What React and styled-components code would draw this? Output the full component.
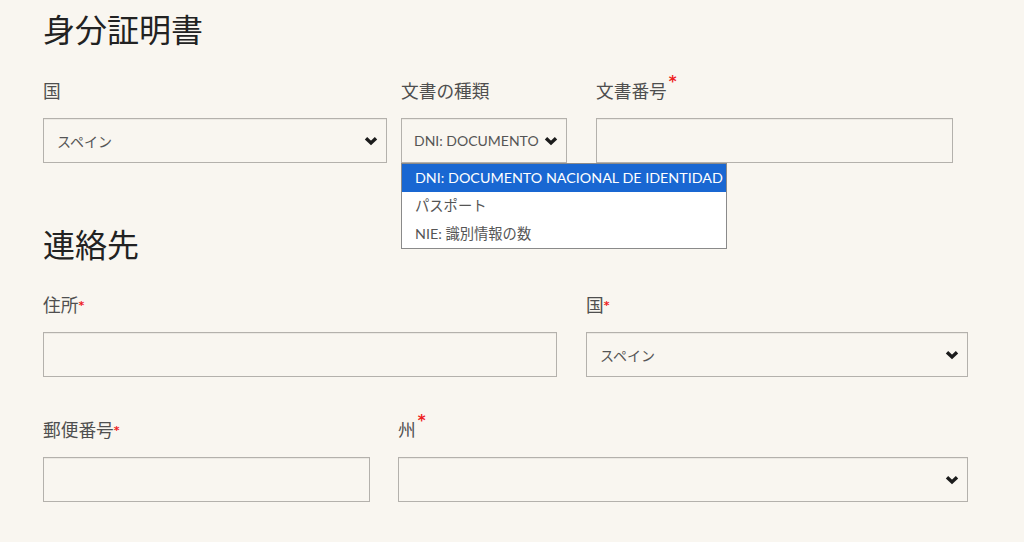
import React from "react";
import styled, { createGlobalStyle } from "styled-components";

const Global = createGlobalStyle`
  html, body { margin: 0; padding: 0; background: #f9f6f0; }
  body { font-family: Lato, "Noto Sans CJK JP", sans-serif; color: #222; }
`;

const Page = styled.div`
  padding: 0 43px;
  min-height: 542px;
  box-sizing: border-box;
`;

const Heading = styled.h2`
  margin: ${(p) => p.$top}px 0 0;
  font-family: "Noto Sans CJK JP", sans-serif;
  font-weight: 400;
  font-size: 32px;
  line-height: 40px;
  height: 40px;
  color: #222;
`;

const Row = styled.div`
  display: flex;
  gap: ${(p) => p.$gap};
  margin-top: ${(p) => p.$top}px;
`;

const Field = styled.div`
  position: relative;
  width: ${(p) => p.$w}px;
  flex: none;
  display: flex;
  flex-direction: column;
`;

const Label = styled.label`
  font-family: "Noto Sans CJK JP", sans-serif;
  font-size: 17.7px;
  line-height: 24px;
  height: 24px;
  color: #4f4f4f;
  margin-bottom: 16px;
  white-space: nowrap;
`;

const Req = styled.span`
  color: #ee2020;
  font-family: "DejaVu Sans", sans-serif;
  font-weight: bold;
  font-size: ${(p) => (p.$sup ? "15px" : "11px")};
  position: relative;
  top: ${(p) => (p.$sup ? "-11px" : "-3px")};
  margin-left: ${(p) => (p.$sup ? "2px" : "0")};
`;

const Box = styled.div`
  box-sizing: border-box;
  height: 45px;
  border: 1px solid #b4b1ac;
  box-shadow: inset 0 1px 0 rgba(0, 0, 0, 0.05);
  background: transparent;
`;

const SelectBox = styled(Box)`
  display: flex;
  align-items: center;
  padding: 0 8px 0 ${(p) => p.$pl}px;
  gap: 6px;
`;

const SelectText = styled.span`
  flex: 1;
  min-width: 0;
  white-space: nowrap;
  font-family: Lato, "Noto Sans CJK JP", sans-serif;
  font-size: 14px;
  color: #555;
`;

const Chevron = styled.svg`
  flex: none;
  width: 14px;
  height: 10px;
`;

const Menu = styled.ul`
  position: absolute;
  top: 85px;
  left: 0;
  margin: 0;
  padding: 0;
  list-style: none;
  width: 326px;
  box-sizing: border-box;
  background: #fff;
  border: 1px solid #8a8a8a;
  z-index: 2;
`;

const Option = styled.li`
  height: 28px;
  line-height: 28px;
  padding-left: 13px;
  font-family: Lato, "Noto Sans CJK JP", sans-serif;
  font-size: 14.3px;
  white-space: nowrap;
  color: ${(p) => (p.$active ? "#fff" : "#555")};
  background: ${(p) => (p.$active ? "#1967d2" : "#fff")};
`;

const ChevronIcon = () => (
  <Chevron viewBox="0 0 14 10">
    <polyline
      points="2,2.2 7,7 12,2.2"
      fill="none"
      stroke="#1c1c1c"
      strokeWidth="3.4"
      strokeLinejoin="miter"
    />
  </Chevron>
);

const Select = ({ value, pl = 13 }) => (
  <SelectBox $pl={pl}>
    <SelectText>{value}</SelectText>
    <ChevronIcon />
  </SelectBox>
);

export default function App() {
  return (
    <>
      <Global />
      <Page>
        <Heading $top={8}>身分証明書</Heading>
        <Row $gap="0" $top={30}>
          <Field $w={344}>
            <Label>国</Label>
            <Select value="スペイン" />
          </Field>
          <Field $w={166} style={{ marginLeft: 14 }}>
            <Label>文書の種類</Label>
            <Select value="DNI: DOCUMENTO" pl={12} />
            <Menu>
              <Option $active>DNI: DOCUMENTO NACIONAL DE IDENTIDAD</Option>
              <Option>パスポート</Option>
              <Option>NIE: 識別情報の数</Option>
            </Menu>
          </Field>
          <Field $w={357} style={{ marginLeft: 29 }}>
            <Label>
              文書番号<Req $sup>*</Req>
            </Label>
            <Box />
          </Field>
        </Row>

        <Heading $top={60}>連絡先</Heading>
        <Row $gap="29px" $top={29}>
          <Field $w={514}>
            <Label>
              住所<Req>*</Req>
            </Label>
            <Box />
          </Field>
          <Field $w={382}>
            <Label>
              国<Req>*</Req>
            </Label>
            <Select value="スペイン" />
          </Field>
        </Row>

        <Row $gap="28px" $top={40}>
          <Field $w={327}>
            <Label>
              郵便番号<Req>*</Req>
            </Label>
            <Box />
          </Field>
          <Field $w={570}>
            <Label>
              州<Req $sup>*</Req>
            </Label>
            <Select value="" />
          </Field>
        </Row>
      </Page>
    </>
  );
}
